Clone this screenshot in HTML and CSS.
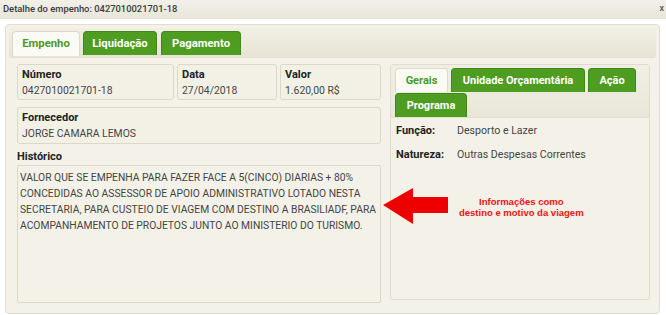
FILE: index.html
```html
<html>
<head>
  <meta charset="utf-8">
  <link rel="stylesheet" href="styles.css">
</head>
<body>
  <div class="titlebar">Detalhe do empenho: 0427010021701-18<span class="close">x</span></div>

  <div class="panel">
    <div class="tabs">
      <div class="tab active t-empenho">Empenho</div>
      <div class="tab t-liq">Liquidação</div>
      <div class="tab t-pag">Pagamento</div>
    </div>

    <div class="content">
      <div class="left">
        <div class="row">
          <div class="box numero">
            <div class="label">Número</div>
            <div class="value">0427010021701-18</div>
          </div>
          <div class="box data">
            <div class="label">Data</div>
            <div class="value">27/04/2018</div>
          </div>
          <div class="box valor">
            <div class="label">Valor</div>
            <div class="value">1.620,00 R$</div>
          </div>
        </div>
        <div class="box fornecedor">
          <div class="label">Fornecedor</div>
          <div class="value">JORGE CAMARA LEMOS</div>
        </div>
        <div class="label hist">Histórico</div>
        <div class="historico">VALOR QUE SE EMPENHA PARA FAZER FACE A 5(CINCO) DIARIAS + 80% CONCEDIDAS AO ASSESSOR DE APOIO ADMINISTRATIVO LOTADO NESTA SECRETARIA, PARA CUSTEIO DE VIAGEM COM DESTINO A BRASILIADF, PARA ACOMPANHAMENTO DE PROJETOS JUNTO AO MINISTERIO DO TURISMO.</div>
      </div>

      <div class="right">
        <div class="subtabs">
          <div class="subtab active s-gerais">Gerais</div>
          <div class="subtab s-unidade">Unidade Orçamentária</div>
          <div class="subtab s-acao">Ação</div>
          <div class="subtab s-prog">Programa</div>
        </div>
        <div class="info">
          <div class="info-row"><span class="info-key">Função:</span>Desporto e Lazer</div>
          <div class="info-row"><span class="info-key">Natureza:</span>Outras Despesas Correntes</div>
        </div>
      </div>

      <!-- anotacao por cima da tela -->
      <div class="note">
        <svg class="arrow" width="66" height="36" viewBox="0 0 66 36">
          <polygon points="0,17 30,0 30,9 65,9 65,25 30,25 30,36" fill="#ee0000"/>
        </svg>
        <div class="note-text">Informações como<br>destino e motivo da viagem</div>
      </div>
    </div>
  </div>
</body>
</html>
```

FILE: styles.css
```css
body {
  margin: 0;
  background: #ffffff;
  font-family: Roboto, "Open Sans", sans-serif;
  font-size: 10.4px;
  color: #333333;
}

.titlebar {
  height: 19px;
  line-height: 17px;
  padding-left: 3px;
  background: linear-gradient(#f2f0e8, #e8e5d8);
  font-size: 9.4px;
  font-weight: 500;
  color: #3a3a3a;
  position: relative;
}

.close {
  position: absolute;
  right: 2px;
  top: 0;
  font-size: 9px;
  color: #555;
}

.panel {
  margin: 5px 6px 0 5px;
  height: 282px;
  border: 1px solid #e2dfcf;
  border-radius: 4px;
  background: #f4f2e8;
  padding: 3px;
}

.tabs {
  display: flex;
  gap: 3px;
  height: 26px;
  padding: 3px 0 0 3px;
  background: linear-gradient(#f1efe5, #e7e4d6);
  border-radius: 3px;
  border-bottom: 1px solid #e4e0d0;
}

.tab {
  box-sizing: border-box;
  height: 24px;
  line-height: 23px;
  text-align: center;
  background: #4e9c20;
  border: 1px solid #3f8a16;
  border-bottom: none;
  border-radius: 4px 4px 0 0;
  color: #ffffff;
  font-size: 11.3px;
  font-weight: 700;
}

.tab.active {
  background: #fbfaf5;
  border-color: #dedac9;
  color: #4a9a1e;
  height: 25px;
}

.t-empenho { width: 68px; }
.t-liq { width: 74px; }
.t-pag { width: 80px; margin-left: 1px; }

.content {
  display: flex;
  gap: 9px;
  padding: 6px 6px 0 8px;
  position: relative;
}

.left {
  width: 365px;
  display: flex;
  flex-direction: column;
}

.row {
  display: flex;
  gap: 3px;
}

.box {
  box-sizing: border-box;
  height: 36px;
  border: 1px solid #dcd8c8;
  border-radius: 3px;
  padding: 1px 4px;
  background: #f3f1e6;
}

.numero { width: 157px; }
.data { width: 100px; }
.valor { width: 101px; }

.fornecedor {
  height: 37px;
  margin-top: 7px;
}

.label {
  font-size: 11px;
  font-weight: 700;
  color: #222;
  line-height: 17px;
}

.value {
  line-height: 16px;
  color: #444;
}

.label.hist {
  margin-top: 4px;
}

.historico {
  box-sizing: border-box;
  height: 138px;
  border: 1px solid #dcd8c8;
  border-radius: 2px;
  padding: 4px 0 2px 2px;
  font-size: 10.3px;
  line-height: 16px;
  color: #444;
}

.right {
  box-sizing: border-box;
  width: 261px;
  height: 236px;
  border: 1px solid #e0dccb;
  border-radius: 3px;
}

.subtabs {
  display: flex;
  flex-wrap: wrap;
  gap: 1px 3px;
  padding: 3px 4px 0 4px;
  border-bottom: 1px solid #e4e0d0;
  background: linear-gradient(#f1efe5, #e9e6d9);
}

.subtab {
  box-sizing: border-box;
  height: 24px;
  line-height: 23px;
  text-align: center;
  background: #4e9c20;
  border: 1px solid #3f8a16;
  border-bottom: none;
  border-radius: 4px 4px 0 0;
  color: #ffffff;
  font-size: 11px;
  font-weight: 700;
}

.subtab.active {
  background: #fbfaf5;
  border-color: #dedac9;
  color: #4a9a1e;
}

.s-gerais { width: 53px; }
.s-unidade { width: 134px; }
.s-acao { width: 48px; }
.s-prog { width: 72px; }

.info {
  padding: 1px 5px;
}

.info-row {
  line-height: 24px;
  font-size: 10.6px;
  color: #444;
}

.info-key {
  display: inline-block;
  width: 61px;
  font-size: 11px;
  font-weight: 700;
  color: #222;
}

.note {
  position: absolute;
  left: 374px;
  top: 130px;
  display: flex;
  align-items: center;
}

.note-text {
  margin-left: 10px;
  margin-top: 2px;
  font-family: "Liberation Sans", Arial, sans-serif;
  font-weight: 700;
  font-size: 9.5px;
  line-height: 11px;
  color: #ee1111;
  text-align: center;
}
```
